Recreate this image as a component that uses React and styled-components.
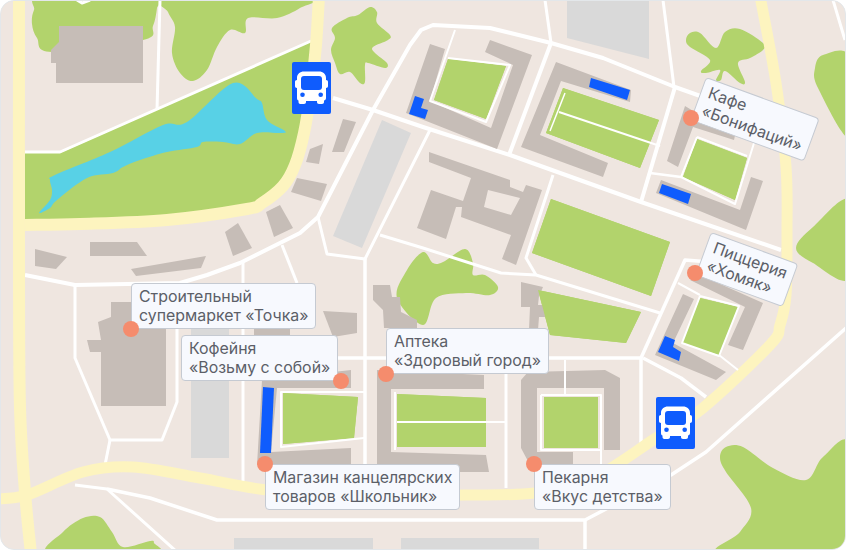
import React from "react";
import styled, { createGlobalStyle } from "styled-components";

const GREEN = "#b2d36c";
const BUILDING = "#c6bdb7";
const GRAY = "#d9d9d9";
const BLUE = "#0f5cfd";
const YELLOW = "#fdf4bf";

// catmull-rom through points, for the soft shapes of the map
const smooth = (pts, closed) => {
  const n = pts.length;
  const at = (i) => (closed ? pts[(i + n) % n] : pts[Math.max(0, Math.min(n - 1, i))]);
  let d = `M${pts[0][0]},${pts[0][1]}`;
  const end = closed ? n : n - 1;
  for (let i = 0; i < end; i++) {
    const [p0, p1, p2, p3] = [at(i - 1), at(i), at(i + 1), at(i + 2)];
    const c1 = [p1[0] + (p2[0] - p0[0]) / 6, p1[1] + (p2[1] - p0[1]) / 6];
    const c2 = [p2[0] - (p3[0] - p1[0]) / 6, p2[1] - (p3[1] - p1[1]) / 6];
    d += `C${c1[0].toFixed(1)},${c1[1].toFixed(1)} ${c2[0].toFixed(1)},${c2[1].toFixed(1)} ${p2[0]},${p2[1]}`;
  }
  return d + (closed ? "Z" : "");
};

const parkRoad = [[25, 225], [80, 224], [167, 220], [247, 209], [262, 203], [283, 186], [295, 165], [304, 133], [311, 90], [316, 45], [319, -4]];
const ringRoad = [[-4, 499], [27, 495], [83, 472], [133, 467], [200, 478], [267, 490], [350, 495], [466, 495], [535, 493], [590, 480], [656, 438], [703, 408], [770, 345], [780, 325], [786, 295], [787, 230], [786, 167], [776, 83], [760, -4]];
const leftRoad = [[19, -4], [19, 275], [20, 408], [25, 492], [31, 554]];

const softGreens = [
  [[44, -4], [34, 10], [32, 24], [37, 38], [52, 52], [143, 40], [153, 26], [157, 8], [157, -4]],
  [[165, -4], [168, 12], [175, 27], [172, 53], [180, 73], [193, 81], [207, 70], [217, 47], [230, 30], [245, 33], [248, 18], [277, 18], [300, 8], [313, -4]],
  [[370, 7], [377, 12], [377, 23], [390, 35], [388, 40], [373, 47], [375, 53], [387, 63], [385, 68], [368, 63], [365, 65], [365, 82], [360, 83], [350, 72], [340, 74], [335, 63], [331, 50], [335, 38], [332, 28], [347, 18], [358, 15]],
  [[690, 33], [700, 33], [716, 48], [725, 32], [740, 29], [763, 43], [763, 50], [750, 58], [738, 63], [745, 82], [740, 83], [725, 71], [721, 80], [716, 80], [720, 70], [706, 73], [701, 71], [710, 60], [690, 47], [686, 40]],
  [[850, 58], [823, 55], [815, 68], [818, 88], [850, 138]],
  [[850, 200], [813, 227], [796, 248], [813, 263], [850, 278]],
  [[850, 445], [823, 457], [806, 480], [773, 468], [743, 447], [726, 447], [720, 457], [726, 472], [751, 508], [740, 532], [720, 554], [850, 554]],
  [[50, 554], [63, 532], [83, 518], [100, 517], [112, 532], [123, 547], [150, 541], [154, 543], [154, 554]],
  [[397, 298], [407, 270], [423, 252], [433, 263], [443, 262], [465, 249], [473, 263], [473, 275], [485, 275], [498, 287], [490, 295], [466, 293], [436, 298], [423, 325]],
];

const lake = [[39, 213], [50, 200], [52, 190], [50, 180], [55, 175], [110, 152], [163, 125], [187, 122], [233, 83], [257, 99], [262, 103], [267, 120], [285, 131], [280, 133], [257, 133], [240, 144], [223, 142], [203, 142], [197, 147], [167, 152], [140, 160], [123, 167], [113, 173], [87, 178], [57, 200], [50, 208]];

const flatGreens = [
  "25,153 60,153 311,41 311,90 304,133 295,165 283,186 262,203 247,209 167,220 80,224 25,225",
  "448,59 506,66 486,119 434,100",
  "563,88 659,120 640,168 546,133",
  "697,139 747,158 735,200 683,177",
  "551,199 670,242 651,296 532,253",
  "538,290 641,312 626,343 550,335",
  "700,298 738,307 719,355 682,343",
  "544,397 598,397 598,448 544,448",
  "397,394 486,398 486,447 397,447",
  "283,393 358,397 354,438 283,444",
];

const grays = [
  "382,120 411,133 362,248 333,236",
  "567,0 649,0 649,59 567,38",
  "191,328 229,328 229,458 191,458",
  "234,538 373,538 373,550 234,550",
  "401,538 539,538 539,550 401,550",
];

const buildings = [
  "59,26 143,26 143,83 56,83 56,63 51,63 51,50 59,42",
  "343,119 356,122 344,152 332,152",
  "310,149 323,144 319,164 306,162",
  "297,178 327,184 321,201 291,192",
  "280,205 293,228 274,237 266,212",
  "238,223 252,248 233,256 225,232",
  "90,242 137,242 147,256 90,256",
  "35,249 67,257 56,269 35,266",
  "131,269 206,256 201,268 136,276",
  "430,44 445,49 430,101 491,128 513,65 485,52 490,40 532,55 497,149 406,113",
  "556,62 631,90 630,102 561,81 540,135 608,163 603,177 521,147",
  "685,106 695,112 736,131 734,140 693,127 678,167 667,161",
  "661,180 740,210 751,177 763,181 746,230 656,193",
  "111,302 166,302 166,406 101,406 101,352 90,352 87,340 101,340 98,322 111,317",
  "323,311 357,313 357,333 333,337",
  "254,328 290,328 290,335 254,335",
  "262,380 351,370 351,388 277,388 271,452 351,448 351,465 257,465",
  "377,370 484,375 484,389 391,389 391,452 486,455 489,472 377,472",
  "521,380 528,372 605,370 620,378 620,450 604,450 604,388 537,388 537,452 573,452 573,465 530,465 521,448",
  "521,282 543,287 539,296 538,305 549,305 549,317 539,317 538,330 529,330 530,307 521,307",
  "373,285 390,285 392,297 400,297 401,312 417,320 417,328 384,328 383,310 373,300",
  "700,275 763,303 743,350 728,345 745,307 690,280",
  "683,294 694,299 673,343 726,372 716,380 655,355",
];

const campus = "M429,152L510,180L510,187L523,192L526,185L542,190L516,265L502,259L511,235L461,217L462,207L456,207L446,239L417,228L431,190L463,201L471,178L429,162ZM488,190L520,198L511,215L484,207Z";

const parking = [
  "415,96 424,99 421,108 428,110 425,119 409,114",
  "591,78 630,90 627,100 589,87",
  "662,184 691,194 688,204 659,193",
  "263,387 274,388 271,453 260,453",
  "665,336 675,340 673,347 681,352 679,361 658,352",
];

const streets = [
  { w: 3, p: "25,152 60,152 311,41" },
  { w: 3, p: "160,0 157,110" },
  { w: 4, p: "25,275 75,285 180,283 207,275 240,263 300,233 318,217 373,110 410,45 421,30 433,25 490,28 551,43 603,58 675,87 720,103" },
  { w: 4, p: "333,98 373,110 423,127 510,155 641,202 781,250" },
  { w: 3, p: "318,217 327,254 365,259 430,130" },
  { w: 3.5, p: "365,259 365,468" },
  { w: 3, p: "380,235 423,248 501,273 536,275 660,313" },
  { w: 3, p: "282,245 297,283" },
  { w: 3, p: "243,262 243,482" },
  { w: 3, p: "75,285 75,358 110,440 162,440 177,402 177,328" },
  { w: 3, p: "110,440 105,465" },
  { w: 3, p: "75,485 107,489 177,552" },
  { w: 3.5, p: "107,489 150,498 217,520 585,520 671,475 706,452 846,328" },
  { w: 3.5, p: "585,520 585,550" },
  { w: 3.5, p: "320,358 641,358" },
  { w: 3.5, p: "641,358 641,445" },
  { w: 3.5, p: "641,358 685,260 710,262" },
  { w: 3.5, p: "643,358 681,378 706,397" },
  { w: 3, p: "663,0 674,87" },
  { w: 3, p: "545,0 551,43" },
  { w: 4, p: "551,43 509,155" },
  { w: 4, p: "675,87 641,202" },
  { w: 3, p: "833,0 845,40" },
  { w: 3, p: "553,175 526,258 536,275" },
  { w: 2.5, p: "681,177 650,173" },
  { w: 3, p: "77,0 82,3 90,0" },
];

const paths = [
  { w: 2, p: "455,30 430,101 486,122 510,65 448,58" },
  { w: 1.5, p: "565,93 550,131" },
  { w: 2, p: "559,112 660,146" },
  { w: 2, p: "697,137 747,156" },
  { w: 2, p: "697,137 681,177 735,204 754,143" },
  { w: 2, p: "700,296 739,306 719,356 682,343 700,296" },
  { w: 2, p: "719,355 738,370" },
  { w: 2, p: "678,283 700,295" },
  { w: 2, p: "565,360 565,395" },
  { w: 3, p: "506,373 506,488" },
  { w: 2, p: "601,448 601,465" },
  { w: 2, p: "541,395 601,395 601,450 541,450 541,395" },
  { w: 2, p: "395,392 395,450" },
  { w: 2, p: "397,422 506,422" },
  { w: 2, p: "364,392 281,392 281,447 364,438" },
];

const places = [
  { id: "kafe", x: 691, y: 118, left: 706, top: 77, angle: 20, lines: ["Кафе", "«Бонифаций»"] },
  { id: "pizza", x: 695, y: 273, left: 711, top: 232, angle: 20, lines: ["Пиццерия", "«Хомяк»"] },
  { id: "stroy", x: 131, y: 329, left: 131, top: 283, lines: ["Строительный", "супермаркет «Точка»"] },
  { id: "coffee", x: 341, y: 381, left: 181, top: 335, lines: ["Кофейня", "«Возьму с собой»"] },
  { id: "apteka", x: 386, y: 374, left: 386, top: 328, lines: ["Аптека", "«Здоровый город»"] },
  { id: "school", x: 265, y: 464, left: 265, top: 464, lines: ["Магазин канцелярских", "товаров «Школьник»"] },
  { id: "bakery", x: 534, y: 464, left: 534, top: 464, lines: ["Пекарня", "«Вкус детства»"] },
];

const BusIcon = () => (
  <svg width="39" height="52" viewBox="0 0 39 52">
    <path
      d="M5 16c0-4 3-6.500 7-6.500h15c4 0 7 2.500 7 6.500v2c1.300 0 2 .8 2 2v4c0 1.200-.7 2-2 2v10c0 1.500-1 2.500-2 2.500v1.500c0 1-.7 2-2 2h-3c-1.300 0-2-1-2-2v-1H14v1c0 1-.7 2-2 2H8.500c-1.300 0-2-1-2-2v-1.500C5.500 38.500 5 37.500 5 36V26c-1.300 0-2-.8-2-2v-4c0-1.200.7-2 2-2z"
      fill="#fff"
    />
    <rect x="9" y="14" width="21" height="14" rx="3" fill={BLUE} />
    <circle cx="10.500" cy="32.700" r="2.300" fill={BLUE} />
    <circle cx="28.700" cy="32.700" r="2.300" fill={BLUE} />
  </svg>
);

export default function App() {
  return (
    <>
      <GlobalStyle />
      <Frame>
        <MapArt viewBox="0 0 846 550">
          {softGreens.map((pts, i) => (
            <path key={i} d={smooth(pts, true)} fill={GREEN} />
          ))}
          {flatGreens.map((p) => (
            <polygon key={p} points={p} fill={GREEN} />
          ))}
          <path d={smooth(lake, true)} fill="#58d1e6" />
          {streets.map((s) => (
            <Road key={s.p} points={s.p} $w={s.w} />
          ))}
          <Highway d={smooth(parkRoad)} $w={12} />
          <Highway d={smooth(ringRoad)} $w={11} />
          <Highway d={smooth(leftRoad)} $w={12} />
          {grays.map((p) => (
            <polygon key={p} points={p} fill={GRAY} />
          ))}
          {buildings.map((p) => (
            <polygon key={p} points={p} fill={BUILDING} />
          ))}
          <path d={campus} fill={BUILDING} fillRule="evenodd" />
          {flatGreens.slice(1).map((p) => (
            <polygon key={p} points={p} fill={GREEN} />
          ))}
          {paths.map((s) => (
            <Road key={s.p} points={s.p} $w={s.w} />
          ))}
          {parking.map((p) => (
            <polygon key={p} points={p} fill={BLUE} />
          ))}
        </MapArt>

        <BusStop $x={292} $y={62}>
          <BusIcon />
        </BusStop>
        <BusStop $x={656} $y={397}>
          <BusIcon />
        </BusStop>

        {places.map((p) => (
          <Label key={p.id} $x={p.left} $y={p.top} $angle={p.angle}>
            {p.lines.map((line) => (
              <div key={line}>{line}</div>
            ))}
          </Label>
        ))}
        {places.map((p) => (
          <Dot key={p.id} $x={p.x} $y={p.y} />
        ))}
      </Frame>
    </>
  );
}

const GlobalStyle = createGlobalStyle`
  body {
    margin: 0;
    background: #fff;
    font-family: Inter, "Noto Sans", sans-serif;
  }
`;

const Frame = styled.div`
  position: relative;
  width: 846px;
  height: 550px;
  box-sizing: border-box;
  border: 1px solid #e3e7ea;
  border-radius: 14px;
  overflow: hidden;
  background: #efe6e0;
`;

const MapArt = styled.svg`
  display: block;
  position: absolute;
  left: -1px;
  top: -1px;
  width: 846px;
  height: 550px;
`;

const Road = styled.polyline`
  fill: none;
  stroke: #fff;
  stroke-width: ${(p) => p.$w}px;
  stroke-linejoin: round;
`;

const Highway = styled.path`
  fill: none;
  stroke: ${YELLOW};
  stroke-width: ${(p) => p.$w}px;
`;

const BusStop = styled.div`
  position: absolute;
  left: ${(p) => p.$x - 1}px;
  top: ${(p) => p.$y - 1}px;
  width: 39px;
  height: 52px;
  border-radius: 2px;
  background: ${BLUE};
  svg {
    display: block;
  }
`;

const Label = styled.div`
  position: absolute;
  left: ${(p) => p.$x - 1}px;
  top: ${(p) => p.$y - 1}px;
  box-sizing: border-box;
  padding: 3px 7px;
  border: 1px solid #c5cad2;
  border-radius: 4px;
  background: #f7f9fe;
  color: #5c5f68;
  font-size: 15.9px;
  line-height: 19px;
  white-space: nowrap;
  transform-origin: 0 0;
  transform: rotate(${(p) => p.$angle || 0}deg);
`;

const Dot = styled.div`
  position: absolute;
  left: ${(p) => p.$x - 9}px;
  top: ${(p) => p.$y - 9}px;
  width: 16px;
  height: 16px;
  border-radius: 50%;
  background: #f58c6d;
`;
